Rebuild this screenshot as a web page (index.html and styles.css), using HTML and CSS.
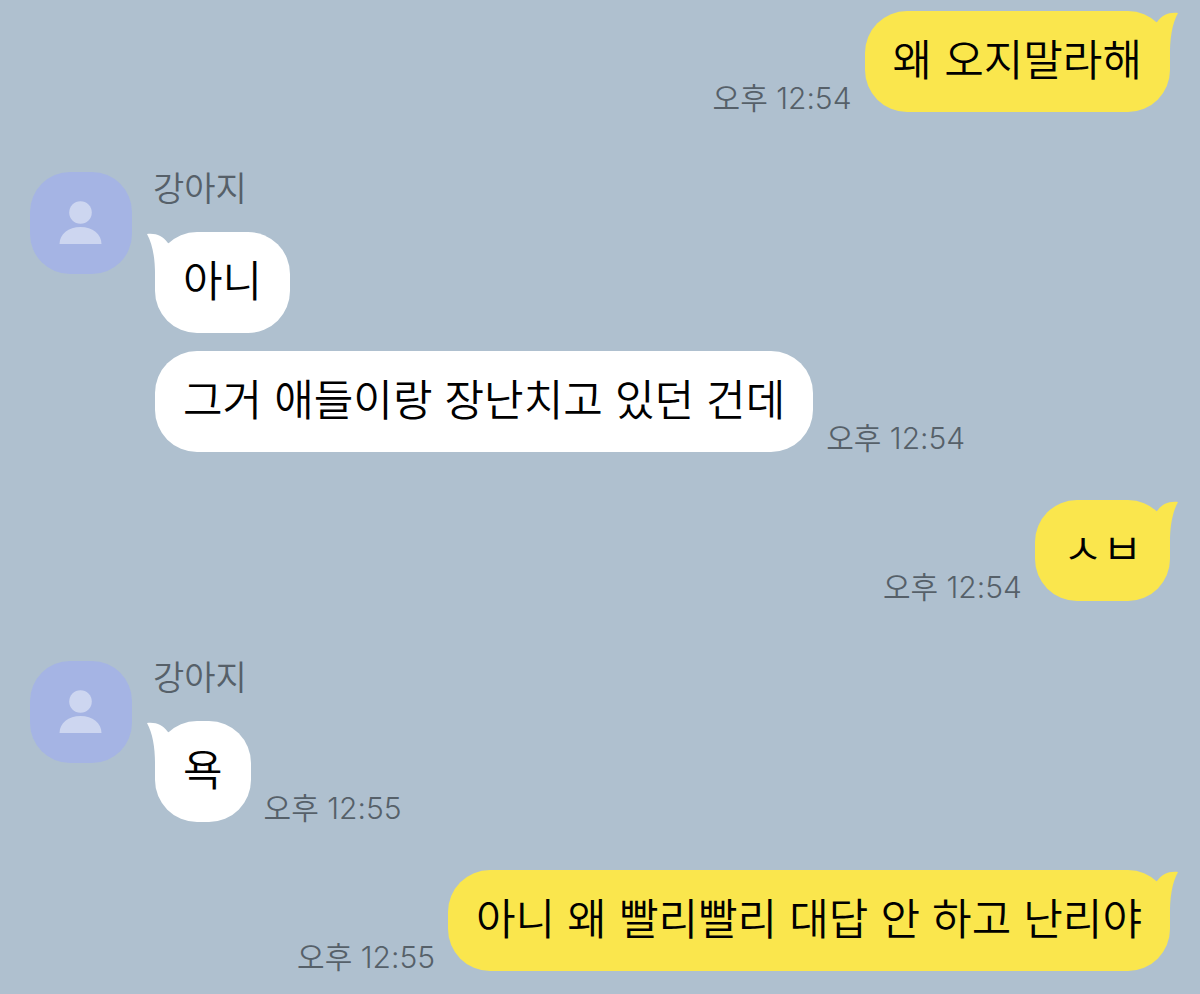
FILE: index.html
```html
<!DOCTYPE html>
<html lang="ko">
<head>
<meta charset="utf-8">
<meta name="viewport" content="width=device-width, initial-scale=1">
<title>강아지</title>
<link rel="stylesheet" href="styles.css">
</head>
<body>
<svg class="defs" aria-hidden="true">
  <symbol id="tail" viewBox="0 0 32 48"><path d="M0 2C9 1 16 4 20.500 10.500L32 20V48H8C8.500 28 6 13 0 2Z"/></symbol>
  <symbol id="person" viewBox="0 0 44 44"><circle cx="21.500" cy="11.500" r="11.300"/><path d="M.5 43C.5 33 9.500 26 21.500 26S42.500 33 42.500 43Z"/></symbol>
</svg>
<main class="chat">
  <section class="group mine">
    <div class="row">
      <p class="bubble">왜 오지말라해<svg class="tail" aria-hidden="true"><use href="#tail"/></svg></p>
      <time class="time" datetime="12:54">오후 12:54</time>
    </div>
  </section>

  <section class="group theirs">
    <div class="avatar"><svg class="person" aria-hidden="true"><use href="#person"/></svg></div>
    <div class="messages">
      <h2 class="name">강아지</h2>
      <div class="row">
        <p class="bubble">아니<svg class="tail" aria-hidden="true"><use href="#tail"/></svg></p>
      </div>
      <div class="row">
        <p class="bubble">그거 애들이랑 장난치고 있던 건데</p>
        <time class="time" datetime="12:54">오후 12:54</time>
      </div>
    </div>
  </section>

  <section class="group mine">
    <div class="row">
      <p class="bubble">ㅅㅂ<svg class="tail" aria-hidden="true"><use href="#tail"/></svg></p>
      <time class="time" datetime="12:54">오후 12:54</time>
    </div>
  </section>

  <section class="group theirs">
    <div class="avatar"><svg class="person" aria-hidden="true"><use href="#person"/></svg></div>
    <div class="messages">
      <h2 class="name">강아지</h2>
      <div class="row">
        <p class="bubble">욕<svg class="tail" aria-hidden="true"><use href="#tail"/></svg></p>
        <time class="time" datetime="12:55">오후 12:55</time>
      </div>
    </div>
  </section>

  <section class="group mine">
    <div class="row">
      <p class="bubble">아니 왜 빨리빨리 대답 안 하고 난리야<svg class="tail" aria-hidden="true"><use href="#tail"/></svg></p>
      <time class="time" datetime="12:55">오후 12:55</time>
    </div>
  </section>
</main>
</body>
</html>
```
FILE: styles.css
```css
* {
  box-sizing: border-box;
}

body {
  margin: 0;
  min-height: 100vh;
  background: #afc0cf;
  color: #000;
  font-family: Inter, "Noto Sans CJK KR", sans-serif;
  font-weight: 350;
}

.defs {
  position: absolute;
  width: 0;
  height: 0;
}

.chat {
  display: flex;
  flex-direction: column;
  gap: 48px;
  padding: 11px 30px 23px;
}

.group {
  display: flex;
}

.mine {
  justify-content: flex-end;
}

.theirs {
  gap: 23px;
  padding-top: 12px;
}

.avatar {
  display: flex;
  flex: none;
  align-items: center;
  justify-content: center;
  width: 102px;
  height: 102px;
  border-radius: 40px;
  background: #a5b4e4;
}

.person {
  width: 44px;
  height: 44px;
  fill: #cdd6f0;
}

.messages {
  display: flex;
  flex-direction: column;
  gap: 18px;
}

.name {
  margin: -4px 0 4px -2px;
  color: #566069;
  font-size: 34px;
  font-weight: 350;
  line-height: 42px;
}

.row {
  display: flex;
  align-items: flex-end;
  gap: 13px;
}

.mine .row {
  flex-direction: row-reverse;
}

.bubble {
  position: relative;
  margin: 0;
  padding: 17px 28px 20px;
  border-radius: 42px;
  background: #fff;
  fill: #fff;
  font-size: 43px;
  line-height: 64px;
}

.mine .bubble {
  background: #fae64d;
  fill: #fae64d;
}

.tail {
  position: absolute;
  top: 0;
  left: -8px;
  width: 32px;
  height: 48px;
}

.mine .tail {
  right: -8px;
  left: auto;
  transform: scaleX(-1);
}

.time {
  flex: none;
  color: #566069;
  font-size: 30px;
  line-height: 28px;
}
```
